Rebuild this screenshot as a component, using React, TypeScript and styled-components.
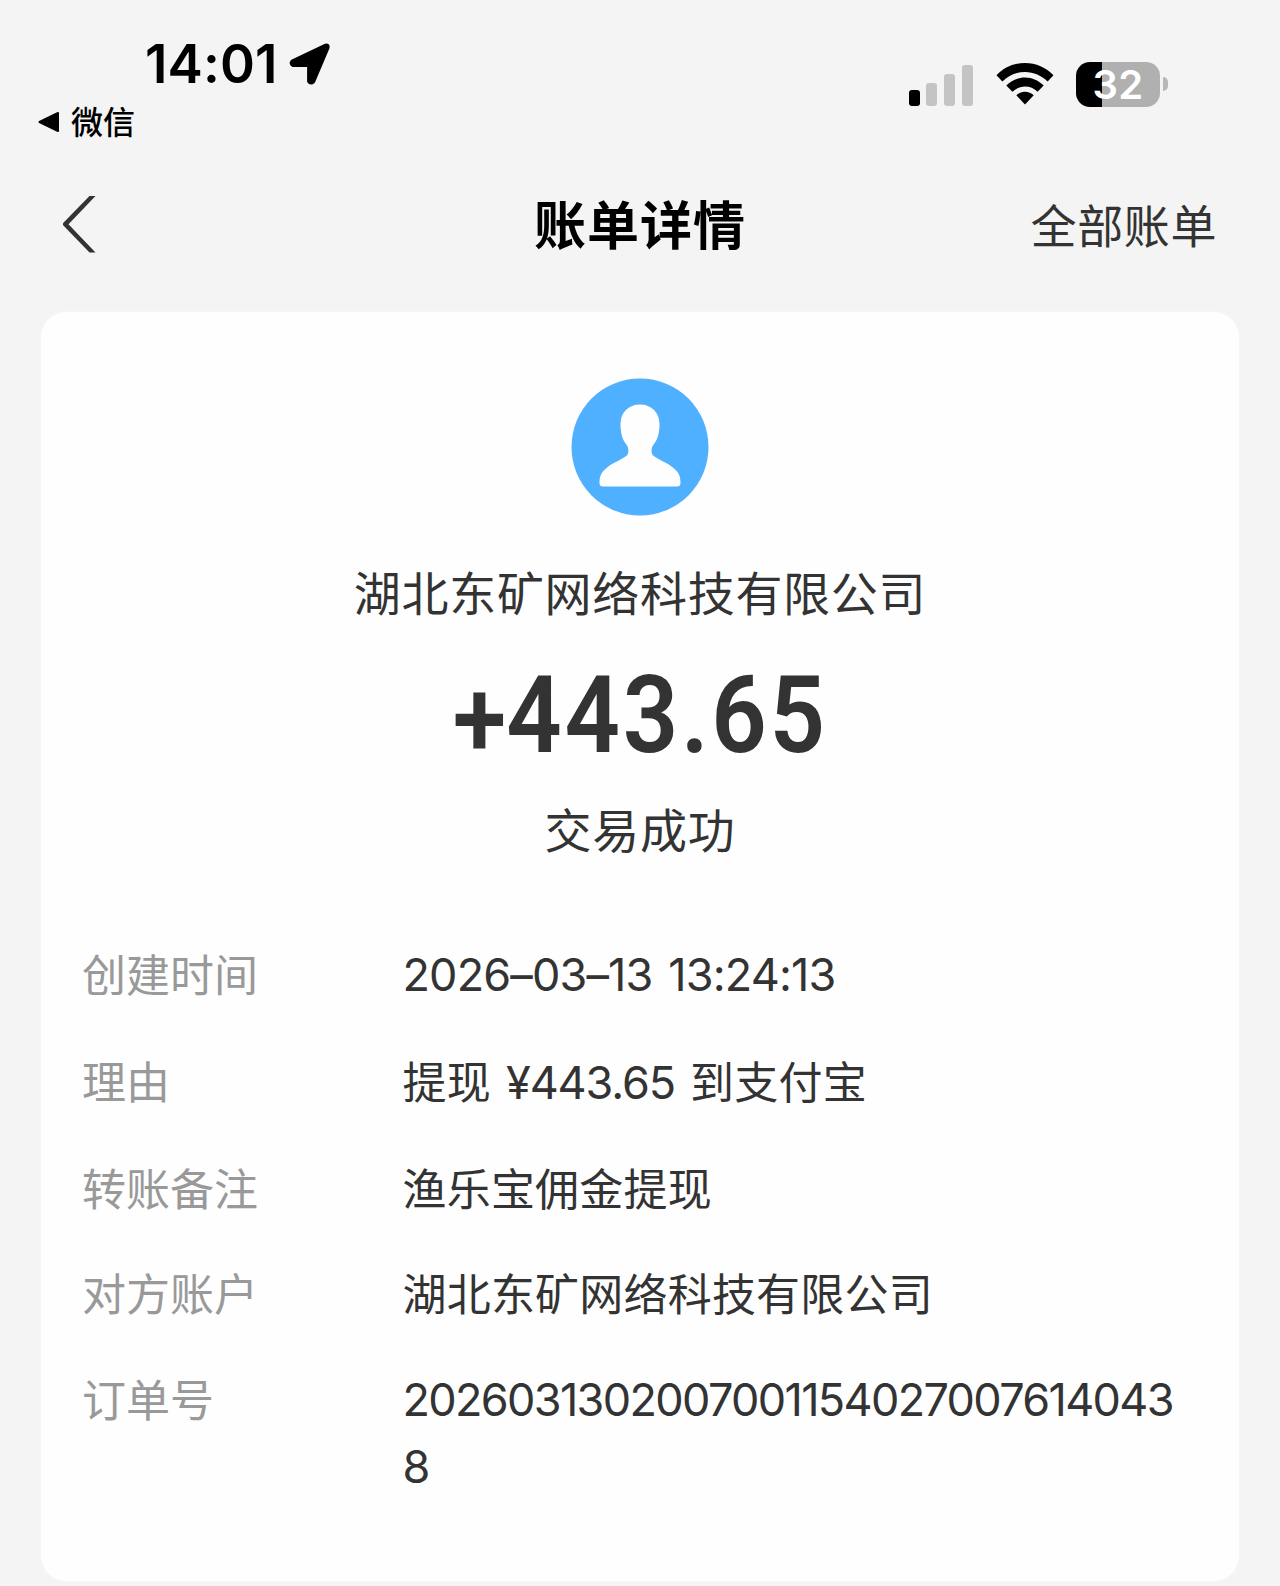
import React from 'react';
import styled, { createGlobalStyle } from 'styled-components';

const GlobalStyle = createGlobalStyle`
  * { box-sizing: border-box; }
  body {
    margin: 0;
    background: #f4f4f4;
    font-family: Inter, "Noto Sans CJK SC", sans-serif;
    color: #333;
  }
`;

const Screen = styled.main`
  display: flex;
  flex-direction: column;
  width: 1280px;
  height: 1586px;
  overflow: hidden;
  background: #f4f4f4;
`;

const StatusBar = styled.header`
  display: flex;
  justify-content: space-between;
  height: 150px;
  padding: 35px 112px 0 38px;
  color: #000;
`;

const StatusLeft = styled.div`
  display: flex;
  flex-direction: column;
`;

const Clock = styled.div`
  display: flex;
  align-items: center;
  gap: 12px;
  height: 58px;
  padding-left: 107px;
  font-size: 53px;
  font-weight: 600;
  line-height: 58px;
  letter-spacing: 0.1px;
`;

const BackToApp = styled.div`
  display: flex;
  align-items: center;
  gap: 11px;
  height: 58px;
  font-size: 32px;
  font-weight: 500;
  line-height: 58px;

  span {
    padding-top: 2px;
  }
`;

const StatusRight = styled.div`
  display: flex;
  align-items: center;
  height: 46px;
  margin-top: 26px;
`;

const Signal = styled.div`
  display: flex;
  align-items: flex-end;
  gap: 6.8px;
  height: 43px;
`;

const SignalBar = styled.span<{ $height: number; $active?: boolean }>`
  width: 11px;
  height: ${(p) => p.$height}px;
  border-radius: 3px;
  background: ${(p) => (p.$active ? '#000' : '#c4c4c4')};
`;

const WifiIcon = styled.svg`
  width: 58px;
  height: 42px;
  margin-left: 23px;
`;

const Battery = styled.div`
  display: flex;
  align-items: center;
  gap: 3px;
  margin-left: 22px;
`;

const BatteryBody = styled.div`
  display: flex;
  align-items: center;
  justify-content: center;
  width: 84px;
  height: 45px;
  border-radius: 14px;
  background: linear-gradient(90deg, #000 26px, #b0b0b0 26px);
  color: #fff;
  font-size: 40px;
  font-weight: 600;
  line-height: 45px;
  letter-spacing: 0.4px;
`;

const BatteryTip = styled.span`
  width: 5px;
  height: 14px;
  border-radius: 0 5px 5px 0;
  background: #b8b8b8;
`;

const NavBar = styled.nav`
  display: grid;
  grid-template-columns: 1fr auto 1fr;
  align-items: center;
  height: 148px;
  padding: 0 63px;
`;

const BackIcon = styled.svg`
  width: 33px;
  height: 57px;
`;

const Title = styled.h1`
  margin: 0;
  padding-top: 5px;
  color: #000;
  font-size: 52px;
  font-weight: 600;
  line-height: 64px;
  letter-spacing: 1px;
`;

const AllBills = styled.a`
  justify-self: end;
  padding-top: 4px;
  font-size: 46px;
  line-height: 64px;
  letter-spacing: 0.6px;
`;

const Card = styled.section`
  display: flex;
  flex-direction: column;
  height: 1269px;
  margin: 14px 41px 0;
  border-radius: 26px;
  background: #fefefe;
  box-shadow: 0 0 3px #fafafa;
`;

const Summary = styled.div`
  display: flex;
  flex-direction: column;
  align-items: center;
  height: 630px;
  padding-top: 66px;
`;

const Avatar = styled.svg`
  width: 138px;
  height: 138px;
`;

const SummaryText = styled.div`
  font-size: 47px;
  line-height: 64px;
  letter-spacing: 0.7px;
`;

const Payee = styled(SummaryText)`
  margin-top: 46px;
`;

const Amount = styled.div`
  margin-top: 27px;
  font-family: Roboto, sans-serif;
  font-size: 108px;
  font-weight: 600;
  line-height: 124px;
  letter-spacing: 3px;
  transform: scaleX(0.9);
`;

const Sign = styled.span`
  display: inline-block;
  letter-spacing: 0;
  transform: translateY(4px);
`;

const Status = styled(SummaryText)`
  margin-top: 22px;
`;

const Details = styled.dl`
  display: flex;
  flex-direction: column;
  gap: 40.3px;
  margin: 0;
  padding: 0 50px 0 41px;
`;

const DetailRow = styled.div`
  display: grid;
  grid-template-columns: 320.5px 1fr;
  font-size: 44px;
  line-height: 65.5px;
`;

const DetailLabel = styled.dt`
  margin: 2px 0 -2px;
  color: #999;
`;

const DetailValue = styled.dd<{ $shift?: number }>`
  margin: ${(p) => p.$shift ?? 0}px 0 ${(p) => -(p.$shift ?? 0)}px;
  word-break: break-all;
  letter-spacing: 0.2px;
`;

const Digits = styled.span<{ $tracking: number; $gap?: number }>`
  margin: 0 ${(p) => p.$gap ?? 0}px;
  font-size: 45px;
  letter-spacing: ${(p) => p.$tracking}px;
  word-spacing: 4px;
`;

export default function App() {
  return (
    <>
      <GlobalStyle />
      <Screen>
        <StatusBar>
          <StatusLeft>
            <Clock>
              14:01
              <svg width="42" height="43" viewBox="0 0 42 43">
                <path
                  d="M3 18.2 36.6 2.2Q39.8 1.6 39 5L24.7 38.6Q21.7 41.6 19.6 38.4V22.6H4.2Q.8 20.6 3 18.2Z"
                  fill="#000"
                  stroke="#000"
                  strokeWidth="3"
                  strokeLinejoin="round"
                />
              </svg>
            </Clock>
            <BackToApp>
              <svg width="22" height="22" viewBox="0 0 22 22">
                <path d="M1.5 11 20 2v18Z" stroke="#000" strokeWidth="2" strokeLinejoin="round" />
              </svg>
              <span>微信</span>
            </BackToApp>
          </StatusLeft>
          <StatusRight>
            <Signal>
              <SignalBar $height={16} $active />
              <SignalBar $height={23} />
              <SignalBar $height={32} />
              <SignalBar $height={41} />
            </Signal>
            <WifiIcon viewBox="0 0 58 42">
              <path d="M29 0C40 0 50 4.400 57.500 12.200L51.600 18.400C45.500 12.600 37.700 9 29 9S12.500 12.600 6.400 18.400L.5 12.200C8 4.400 18 0 29 0Z" />
              <path d="M29 14.500C36.300 14.500 42.600 17.500 47.700 22.500L41.600 28.800C38 25.300 33.800 23.500 29 23.500S20 25.300 16.400 28.800L10.300 22.500C15.400 17.500 21.700 14.500 29 14.500Z" />
              <path d="M29 28.700C32.400 28.700 35.300 30 37.700 32.300L29 41.500 20.300 32.300C22.700 30 25.600 28.700 29 28.700Z" />
            </WifiIcon>
            <Battery>
              <BatteryBody>32</BatteryBody>
              <BatteryTip />
            </Battery>
          </StatusRight>
        </StatusBar>
        <NavBar>
          <BackIcon viewBox="0 0 33 57" fill="#333">
            <path d="M26.500 0H32.500L5.500 28.200 32.500 56.500H26.500L.4 29.600Q-.6 28.200.4 26.800Z" />
          </BackIcon>
          <Title>账单详情</Title>
          <AllBills>全部账单</AllBills>
        </NavBar>
        <Card>
          <Summary>
            <Avatar viewBox="0 0 138 138">
              <circle cx="69" cy="69" r="68.500" fill="#4fb0ff" />
              <path
                d="M69 26.500C80.500 26.500 88.500 34.500 88.500 46C88.500 54 87 61 83 66C80.500 69 79.500 74 82 77.500C88 82 96 84.500 102.500 90C108 94.500 109.500 98.500 109.500 105Q109.500 108.500 106 108.500H32Q28.500 108.500 28.500 105C28.500 98.500 30 94.500 35.500 90C42 84.500 50 82 56 77.500C58.500 74 57.500 69 55 66C51 61 49.500 54 49.500 46C49.500 34.500 57.500 26.500 69 26.500Z"
                fill="#fefefe"
              />
            </Avatar>
            <Payee>湖北东矿网络科技有限公司</Payee>
            <Amount>
              <Sign>+</Sign>443.65
            </Amount>
            <Status>交易成功</Status>
          </Summary>
          <Details>
            <DetailRow>
              <DetailLabel>创建时间</DetailLabel>
              <DetailValue>
                <Digits $tracking={-0.85}>2026–03–13 13:24:13</Digits>
              </DetailValue>
            </DetailRow>
            <DetailRow>
              <DetailLabel>理由</DetailLabel>
              <DetailValue $shift={1}>
                提现 <Digits $tracking={-1.1} $gap={2.5}>¥443.65</Digits> 到支付宝
              </DetailValue>
            </DetailRow>
            <DetailRow>
              <DetailLabel>转账备注</DetailLabel>
              <DetailValue $shift={2}>渔乐宝佣金提现</DetailValue>
            </DetailRow>
            <DetailRow>
              <DetailLabel>对方账户</DetailLabel>
              <DetailValue $shift={2}>湖北东矿网络科技有限公司</DetailValue>
            </DetailRow>
            <DetailRow>
              <DetailLabel>订单号</DetailLabel>
              <DetailValue>
                <Digits $tracking={-1.65}>20260313020070011540270076140438</Digits>
              </DetailValue>
            </DetailRow>
          </Details>
        </Card>
      </Screen>
    </>
  );
}
